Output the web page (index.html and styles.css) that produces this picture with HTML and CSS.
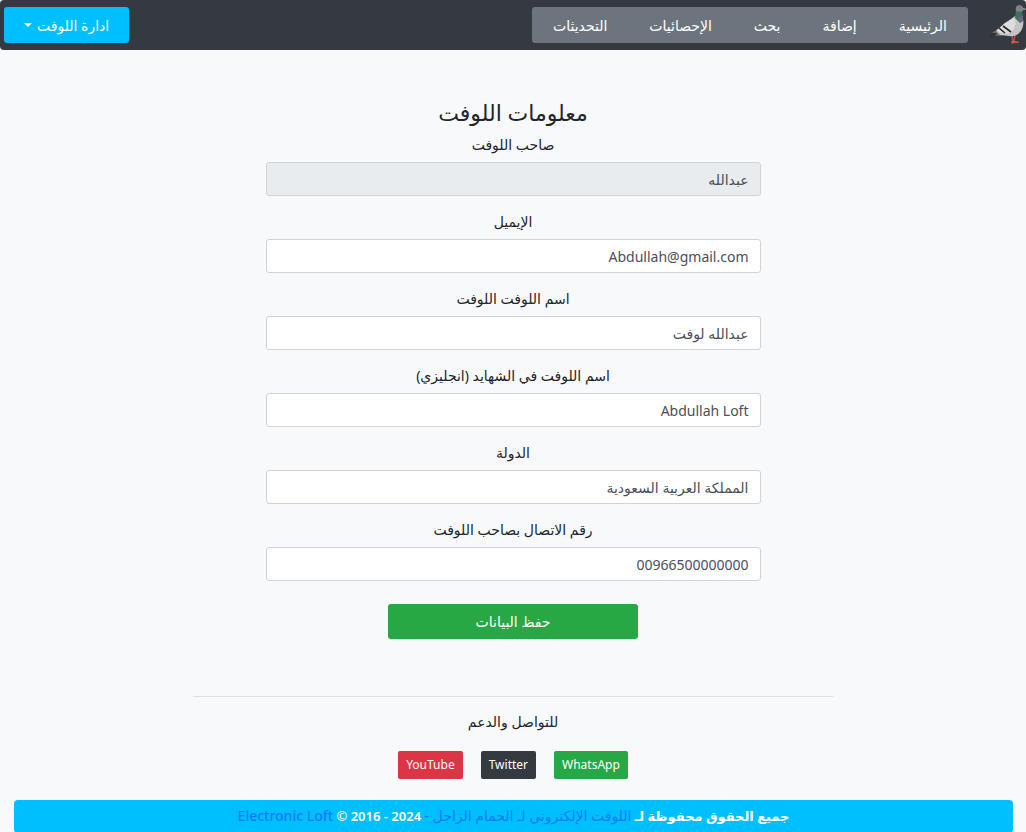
FILE: index.html
```html
<!DOCTYPE html>
<html lang="ar" dir="rtl">
<head>
    <meta charset="UTF-8">
    <meta name="viewport" content="width=device-width, initial-scale=1.0">
    <title>معلومات اللوفت</title>
    <link rel="stylesheet" href="styles.css">
</head>
<body>
    <!-- navbar -->
    <nav class="navbar">
        <a class="logo" href="#" aria-label="الرئيسية">
            <svg width="40" height="44" viewBox="0 0 40 44" aria-hidden="true">
                <path d="M1 34l5-4 7-5 5 7-6 1-5-1z" fill="#6f6e6c"/>
                <path d="M1 34l5-4 5 0-2 3z" fill="#33322f"/>
                <path d="M26 32l1 7M29 31l-1 8" stroke="#a8564c" stroke-width="1.5" fill="none"/>
                <path d="M25 38l5 0 3 1 0 1-4 0-3 1z" fill="#d9503f"/>
                <path d="M29 13l8 3c1 4 0 9-2 12-3 4-7 6-12 5l-9-1-4-4 8-7z" fill="#c4c4c4"/>
                <path d="M28 15c3 4 1 11-3 14-3 2-8 2-12 0l-2-2 8-7z" fill="#dddddb"/>
                <path d="M13 25l6 5M17 23l8 6" stroke="#25252b" stroke-width="1.6"/>
                <path d="M30 6l6 1 1 10-3 3-5-5z" fill="#3d7060"/>
                <path d="M32 15l5-3 0 6-3 2z" fill="#756080"/>
                <path d="M30 8c-1-4 1-6 4-6 3 1 4 3 3 6-2 1-5 1-7 0z" fill="#7d848f"/>
                <path d="M37 5l3 1-2 1z" fill="#c9bdb6"/>
                <circle cx="34" cy="4" r="0.7" fill="#c65a46"/>
            </svg>
        </a>
        <div class="nav-links">
            <a href="#">الرئيسية</a>
            <a href="#">إضافة</a>
            <a href="#">بحث</a>
            <a href="#">الإحصائيات</a>
            <a href="#">التحديثات</a>
        </div>
        <button class="manage-button" type="button">ادارة اللوفت</button>
    </nav>

    <main>
        <h1>معلومات اللوفت</h1>
        <form class="loft-form">
            <div class="form-group">
                <label for="owner">صاحب اللوفت</label>
                <input type="text" id="owner" value="عبدالله" readonly>
            </div>
            <div class="form-group">
                <label for="email">الإيميل</label>
                <input type="text" id="email" value="Abdullah@gmail.com">
            </div>
            <div class="form-group">
                <label for="loft-name">اسم اللوفت اللوفت</label>
                <input type="text" id="loft-name" value="عبدالله لوفت">
            </div>
            <div class="form-group">
                <label for="loft-name-en">اسم اللوفت في الشهايد (انجليزي)</label>
                <input type="text" id="loft-name-en" value="Abdullah Loft">
            </div>
            <div class="form-group">
                <label for="country">الدولة</label>
                <input type="text" id="country" value="المملكة العربية السعودية">
            </div>
            <div class="form-group">
                <label for="phone">رقم الاتصال بصاحب اللوفت</label>
                <input type="text" id="phone" value="00966500000000">
            </div>
            <button class="save-button" type="submit">حفظ البيانات</button>
        </form>
    </main>

    <!-- contact -->
    <section class="contact">
        <h2>للتواصل والدعم</h2>
        <div class="social">
            <a class="whatsapp" href="#">WhatsApp</a>
            <a class="twitter" href="#">Twitter</a>
            <a class="youtube" href="#">YouTube</a>
        </div>
    </section>

    <footer>
        جميع الحقوق محفوظة لـ <a href="#">اللوفت الإلكتروني لـ الحمام الزاجل -</a> 2024 - 2016 © <a href="#">Electronic Loft</a>
    </footer>
</body>
</html>
```

FILE: styles.css
```css
* {
    box-sizing: border-box;
}
body {
    margin: 0;
    font-family: "Noto Sans", "DejaVu Sans", sans-serif;
    font-size: 14px;
    line-height: 21px;
    color: #212529;
    background-color: #f8f9fa;
    text-align: center;
}
a {
    text-decoration: none;
}
button {
    font: inherit;
    color: white;
    border: none;
    border-radius: 3px;
    cursor: pointer;
}

/* navbar */
.navbar {
    display: flex;
    align-items: center;
    height: 50px;
    padding-left: 4px;
    background-color: #343a40;
    border-radius: 4px;
}
.logo {
    display: flex;
    margin-left: 18px;
}
.nav-links {
    display: flex;
    background-color: #6c757d;
    border-radius: 3px;
}
.nav-links a {
    padding: 8px 21px 7px;
    color: white;
}
.manage-button {
    display: flex;
    align-items: center;
    gap: 5px;
    height: 36px;
    margin-right: auto;
    padding: 0 20px;
    background-color: #00bfff;
}
.manage-button::after {
    content: "";
    border-top: 4px solid white;
    border-left: 4px solid transparent;
    border-right: 4px solid transparent;
}

/* form */
main {
    padding: 48px 15px 0;
}
h1 {
    margin: 0 0 8px;
    font-size: 22px;
    font-weight: 500;
    line-height: 28px;
}
.loft-form {
    max-width: 495px;
    margin: 0 auto;
}
.form-group {
    margin-bottom: 15px;
}
.form-group label {
    display: block;
    margin-bottom: 7px;
}
.form-group input {
    display: block;
    width: 100%;
    height: 34px;
    padding: 0 11px;
    font: inherit;
    color: #495057;
    background-color: white;
    border: 1px solid #ced4da;
    border-radius: 3px;
}
.form-group input[readonly] {
    background-color: #e9ecef;
}
.save-button {
    width: 250px;
    height: 35px;
    margin-top: 8px;
    background-color: #28a745;
}

/* contact */
.contact {
    max-width: 640px;
    margin: 57px auto 21px;
    padding-top: 14px;
    border-top: 1px solid #dee2e6;
}
h2 {
    margin: 0 0 19px;
    font-size: 14px;
    font-weight: 500;
    line-height: 21px;
}
.social {
    display: flex;
    justify-content: center;
    gap: 18px;
}
.social a {
    padding: 4px 8px;
    font-size: 12px;
    line-height: 20px;
    color: white;
    border-radius: 2px;
}
.whatsapp {
    background-color: #28a745;
}
.twitter {
    background-color: #343a40;
}
.youtube {
    background-color: #dc3545;
}

footer {
    margin: 0 13px 0 14px;
    padding: 5px 10px 6px;
    font-size: 13px;
    font-weight: 600;
    color: white;
    background-color: #00bfff;
    border-radius: 4px;
}
footer a {
    font-size: 14px;
    font-weight: 500;
    color: #007bff;
}
```
